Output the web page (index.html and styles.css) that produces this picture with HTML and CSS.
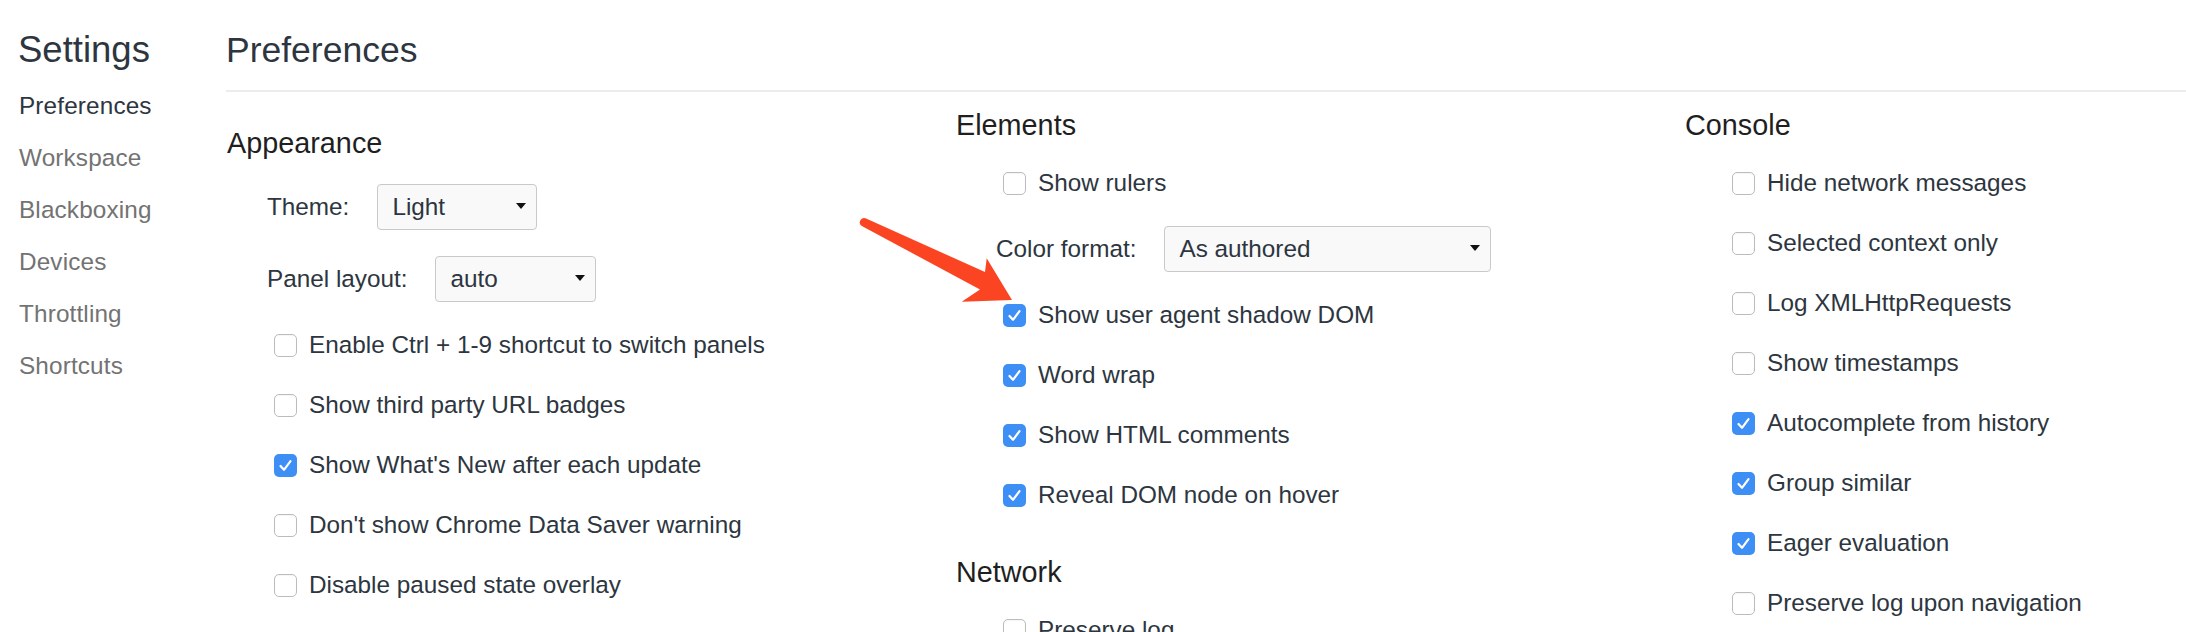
FILE: index.html
```html
<!DOCTYPE html>
<html>
<head>
<meta charset="utf-8">
<link rel="stylesheet" href="styles.css">
</head>
<body>
<div class="app">
  <aside class="sidebar">
    <div class="title title-side">Settings</div>
    <nav class="nav">
      <div class="nav-item active">Preferences</div>
      <div class="nav-item">Workspace</div>
      <div class="nav-item">Blackboxing</div>
      <div class="nav-item">Devices</div>
      <div class="nav-item">Throttling</div>
      <div class="nav-item">Shortcuts</div>
    </nav>
  </aside>
  <main class="main">
    <div class="header"><div class="title">Preferences</div></div>
    <div class="columns">
      <div class="col col-first">
        <section class="section">
          <div class="section-title">Appearance</div>
          <div class="select-row"><span class="select-label">Theme:</span><div class="select w-theme"><span>Light</span><svg class="caret" viewBox="0 0 10 6"><path d="M0 0H10L5 6Z"/></svg></div></div>
          <div class="select-row"><span class="select-label">Panel layout:</span><div class="select w-layout"><span>auto</span><svg class="caret" viewBox="0 0 10 6"><path d="M0 0H10L5 6Z"/></svg></div></div>
          <div class="cb-row"><span class="cb"></span><span>Enable Ctrl + 1-9 shortcut to switch panels</span></div>
          <div class="cb-row"><span class="cb"></span><span>Show third party URL badges</span></div>
          <div class="cb-row"><span class="cb on"><svg viewBox="0 0 23 23"><path d="M6.5 12L10 15.8L16.5 7.2"/></svg></span><span>Show What's New after each update</span></div>
          <div class="cb-row"><span class="cb"></span><span>Don't show Chrome Data Saver warning</span></div>
          <div class="cb-row"><span class="cb"></span><span>Disable paused state overlay</span></div>
        </section>
      </div>
      <div class="col">
        <section class="section">
          <div class="section-title">Elements</div>
          <div class="cb-row"><span class="cb"></span><span>Show rulers</span></div>
          <div class="select-row"><span class="select-label">Color format:</span><div class="select w-color"><span>As authored</span><svg class="caret" viewBox="0 0 10 6"><path d="M0 0H10L5 6Z"/></svg></div></div>
          <div class="cb-row"><span class="cb on"><svg viewBox="0 0 23 23"><path d="M6.5 12L10 15.8L16.5 7.2"/></svg></span><span>Show user agent shadow DOM</span></div>
          <div class="cb-row"><span class="cb on"><svg viewBox="0 0 23 23"><path d="M6.5 12L10 15.8L16.5 7.2"/></svg></span><span>Word wrap</span></div>
          <div class="cb-row"><span class="cb on"><svg viewBox="0 0 23 23"><path d="M6.5 12L10 15.8L16.5 7.2"/></svg></span><span>Show HTML comments</span></div>
          <div class="cb-row"><span class="cb on"><svg viewBox="0 0 23 23"><path d="M6.5 12L10 15.8L16.5 7.2"/></svg></span><span>Reveal DOM node on hover</span></div>
        </section>
        <section class="section">
          <div class="section-title">Network</div>
          <div class="cb-row"><span class="cb"></span><span>Preserve log</span></div>
        </section>
      </div>
      <div class="col">
        <section class="section">
          <div class="section-title">Console</div>
          <div class="cb-row"><span class="cb"></span><span>Hide network messages</span></div>
          <div class="cb-row"><span class="cb"></span><span>Selected context only</span></div>
          <div class="cb-row"><span class="cb"></span><span>Log XMLHttpRequests</span></div>
          <div class="cb-row"><span class="cb"></span><span>Show timestamps</span></div>
          <div class="cb-row"><span class="cb on"><svg viewBox="0 0 23 23"><path d="M6.5 12L10 15.8L16.5 7.2"/></svg></span><span>Autocomplete from history</span></div>
          <div class="cb-row"><span class="cb on"><svg viewBox="0 0 23 23"><path d="M6.5 12L10 15.8L16.5 7.2"/></svg></span><span>Group similar</span></div>
          <div class="cb-row"><span class="cb on"><svg viewBox="0 0 23 23"><path d="M6.5 12L10 15.8L16.5 7.2"/></svg></span><span>Eager evaluation</span></div>
          <div class="cb-row"><span class="cb"></span><span>Preserve log upon navigation</span></div>
        </section>
      </div>
    </div>
  </main>
  <svg class="annotation" viewBox="0 0 180 140" width="180" height="140">
    <path d="M15.5 18.3L135 72L136.7 58.3L162 100L111.7 101.7L130 89.5L11.8 26A4.3 4.3 0 0 1 15.5 18.3Z"/>
  </svg>
</div>
</body>
</html>
```

FILE: styles.css
```css
html, body {
  margin: 0;
  padding: 0;
  background: #ffffff;
  overflow: hidden;
}

body {
  font-family: "Liberation Sans", Arial, Helvetica, sans-serif;
  font-size: 24.3px;
  color: #2d3640;
}

.app {
  position: relative;
  display: flex;
  width: 2186px;
  height: 632px;
  overflow: hidden;
}

.sidebar {
  flex: 0 0 226px;
  box-sizing: border-box;
  padding-left: 19px;
}

.title {
  font-size: 35.5px;
  line-height: 44px;
  padding-top: 28px;
  color: #2d3640;
  white-space: nowrap;
}

.title-side {
  font-size: 36.5px;
  margin-left: -1px;
}

.nav {
  margin-top: 8px;
}

.nav-item {
  line-height: 52px;
  height: 52px;
  color: #737373;
  white-space: nowrap;
  letter-spacing: 0.15px;
}

.nav-item.active {
  color: #2d3640;
}

.main {
  flex: 1 1 auto;
  min-width: 0;
}

.header {
  padding-bottom: 18px;
  border-bottom: 2px solid #ececec;
}

.columns {
  display: grid;
  grid-template-columns: 729px 729px 1fr;
  padding-left: 1px;
  padding-top: 15px;
}

.col-first {
  padding-top: 18px;
}

.section + .section {
  margin-top: 29px;
}

.section-title {
  font-size: 28.8px;
  line-height: 36px;
  height: 36px;
  color: #1f1f1f;
  margin-bottom: 10px;
  white-space: nowrap;
}

.cb-row {
  display: flex;
  align-items: center;
  height: 60px;
  padding-left: 47px;
  white-space: nowrap;
}

.cb {
  flex: 0 0 auto;
  box-sizing: border-box;
  width: 23px;
  height: 23px;
  margin-right: 12px;
  border: 1px solid #bcbcbc;
  border-radius: 5px;
  background: #ffffff;
  box-shadow: inset 0 1px 1px rgba(0, 0, 0, 0.04);
}

.cb.on {
  border: none;
  background: #3d8ef5;
  box-shadow: none;
}

.cb svg {
  display: block;
  width: 23px;
  height: 23px;
}

.cb svg path {
  fill: none;
  stroke: #ffffff;
  stroke-width: 2.2;
  stroke-linecap: round;
  stroke-linejoin: round;
}

.select-row {
  display: flex;
  align-items: center;
  height: 72px;
  padding-left: 40px;
  white-space: nowrap;
}

.select-label {
  margin-right: 28px;
}

.select {
  box-sizing: border-box;
  height: 46px;
  display: flex;
  align-items: center;
  justify-content: space-between;
  padding: 0 10px 0 14px;
  border: 1.5px solid #c9c9c9;
  border-radius: 4px;
  background: #f9f9f9;
  color: #2d3640;
}

.w-theme { width: 160px; }
.w-layout { width: 161px; }
.w-color { width: 327px; }

.caret {
  width: 10px;
  height: 6px;
  fill: #111111;
  margin-top: -2px;
}

.annotation {
  position: absolute;
  left: 850px;
  top: 200px;
  fill: #fb4522;
}
```
